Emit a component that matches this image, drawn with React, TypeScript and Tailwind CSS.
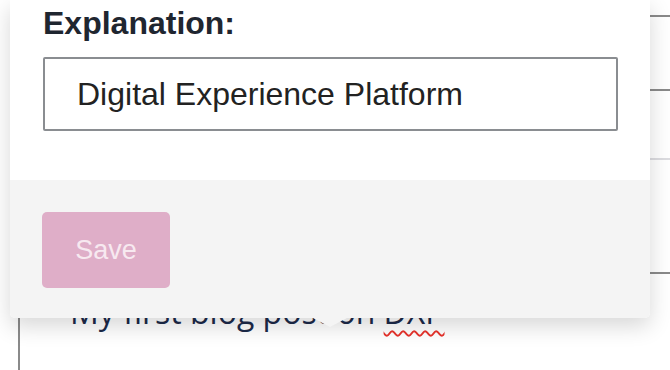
import React from 'react';

const App = () => {
  return (
    <div className="relative w-[670px] h-[370px] overflow-hidden bg-white" style={{ fontFamily: '"Liberation Sans", Arial, sans-serif' }}>
      {/* Editor behind the popup */}
      <div className="ml-[18px] h-full border-l-2 border-[#8a8a8a]">
        <div className="h-[17px] border-b-2 border-[#8a8a8a]" />
        <div className="h-[74px] border-b-2 border-[#8a8a8a]" />
        <div className="h-[69px] border-b-2 border-[#dcdce0]" />
        <div className="h-[114px] border-b-2 border-[#8a8a8a]" />
        <p
          className="pl-[50px] mt-[14px] text-[32px] leading-[48px] text-[#1c2a4a] whitespace-nowrap"
          style={{ fontFamily: '"Open Sans", sans-serif' }}
        >
          My first blog post on{' '}
          <span className="underline decoration-wavy decoration-[#e8322b] decoration-[1.5px] underline-offset-[6px]">DXP</span>
        </p>
      </div>

      {/* Popup */}
      <div className="absolute top-0 left-[10px] w-[640px] rounded-b-[5px] shadow-[0_8px_22px_rgba(0,0,0,0.16)]">
        <div className="bg-white pl-[33px] pr-[32px] pt-[5px] pb-[49px]">
          <label className="block text-[32px] leading-[36px] font-bold text-[#1f2630]">Explanation:</label>
          <div className="mt-[16px] h-[74px] flex items-center border-2 border-[#8a8d91] rounded-[2px] px-[32px] text-[32px] text-[#222]">
            Digital Experience Platform
          </div>
        </div>
        <div className="relative bg-[#f4f4f4] h-[138px] px-[32px] pt-[32px] rounded-b-[5px]">
          <button className="w-[128px] h-[76px] rounded-[5px] bg-[#dfaec8] text-[27px] text-[#f7e9f0]">
            Save
          </button>
          <div className="absolute left-[303px] -bottom-[9px] w-0 h-0 border-l-[17px] border-r-[17px] border-t-[9px] border-l-transparent border-r-transparent border-t-[#f4f4f4]" />
        </div>
      </div>
    </div>
  );
};

export default App;
